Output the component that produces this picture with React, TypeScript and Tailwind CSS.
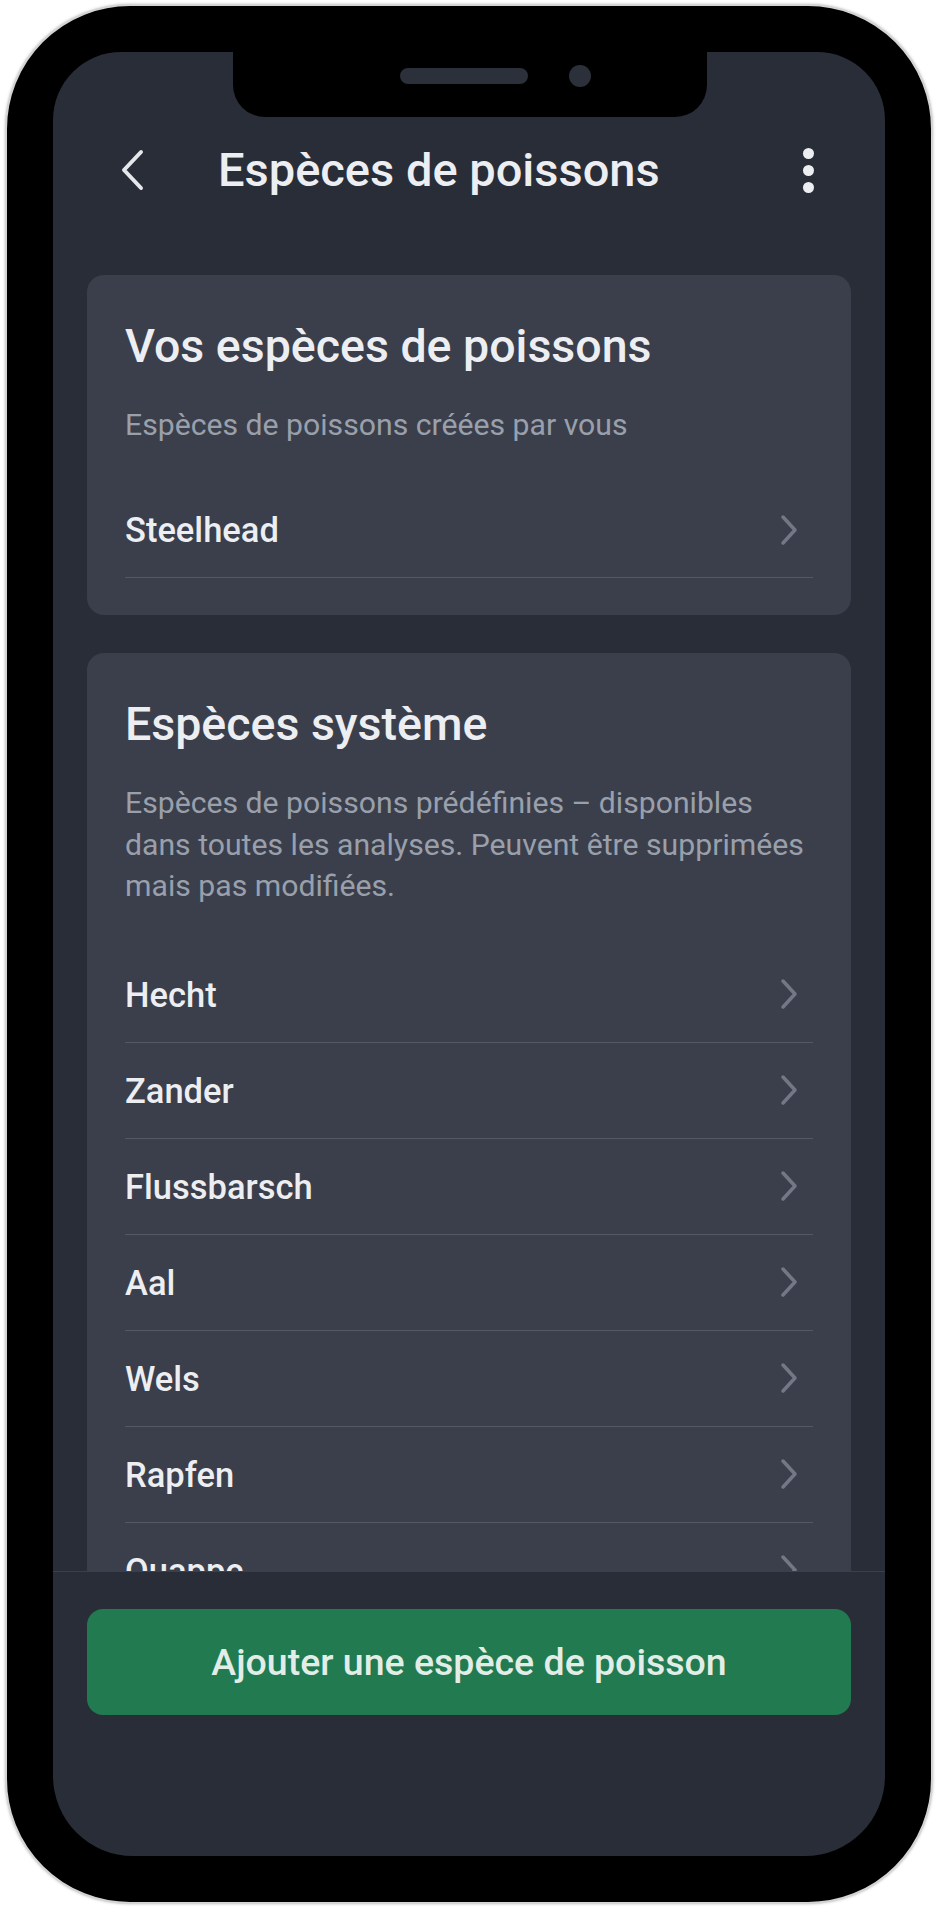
const systemSpecies = ["Hecht", "Zander", "Flussbarsch", "Aal", "Wels", "Rapfen", "Quappe"];

const RowChevron = () => (
  <svg width="18" height="32" viewBox="0 0 18 32" fill="none" className="mr-[15px] shrink-0">
    <path d="M3 3l12 13L3 29" stroke="#727886" strokeWidth="3.5" strokeLinecap="round" strokeLinejoin="round" />
  </svg>
);

const SpeciesRow = ({ name }: { name: string }) => (
  <div className="h-[96px] flex items-center justify-between border-b border-[#525866]">
    <span className="pt-[3px] text-[34.5px] font-medium text-[#eceef2]">{name}</span>
    <RowChevron />
  </div>
);

export default function App() {
  return (
    <div
      className="min-h-screen bg-white pt-[4px] pl-[5px]"
      style={{ fontFamily: 'Roboto, "Noto Sans", sans-serif' }}
    >
      {/* phone frame */}
      <div className="w-[928px] h-[1900px] rounded-[125px] bg-black border-2 border-[#d4d4d4] p-[46px] shadow-[0_0_3px_rgba(0,0,0,0.25)]">
        <div className="relative w-full h-full rounded-t-[68px] rounded-b-[80px] bg-[#292d38] overflow-hidden flex flex-col">
          {/* notch */}
          <div className="absolute top-0 left-[180px] w-[474px] h-[65px] bg-black rounded-b-[32px]">
            <div className="absolute left-[167px] top-[16px] w-[128px] h-[16px] rounded-full bg-[#2c303b]" />
            <div className="absolute left-[336px] top-[13px] w-[22px] h-[22px] rounded-full bg-[#2c303b]" />
          </div>

          {/* header */}
          <div className="mt-[78px] h-[80px] shrink-0 flex items-center pl-[67px] pr-[71px]">
            <svg width="24" height="42" viewBox="0 0 24 42" fill="none" className="shrink-0">
              <path d="M21 3L4 21l17 18" stroke="#e5e7eb" strokeWidth="4" strokeLinecap="round" strokeLinejoin="round" />
            </svg>
            <h1 className="ml-[74px] flex-1 text-[47px] font-medium text-[#eceef2]">Espèces de poissons</h1>
            <div className="flex flex-col gap-[6px]">
              <div className="w-[11px] h-[11px] rounded-full bg-[#eceef2]" />
              <div className="w-[11px] h-[11px] rounded-full bg-[#eceef2]" />
              <div className="w-[11px] h-[11px] rounded-full bg-[#eceef2]" />
            </div>
          </div>

          {/* content */}
          <div className="flex-1 overflow-hidden px-[34px] pt-[65px]">
            <div className="bg-[#3a3f4b] rounded-[17px] px-[38px] pt-[46px] pb-[37px]">
              <h2 className="text-[46.5px] leading-[50px] font-medium text-[#eceef2]">Vos espèces de poissons</h2>
              <p className="mt-[33px] text-[30.2px] leading-[41px] text-[#9aa0ab]">
                Espèces de poissons créées par vous
              </p>
              <div className="mt-[37px]">
                <SpeciesRow name="Steelhead" />
              </div>
            </div>

            <div className="mt-[38px] bg-[#3a3f4b] rounded-t-[17px] px-[38px] pt-[46px]">
              <h2 className="text-[46.5px] leading-[50px] font-medium text-[#eceef2]">Espèces système</h2>
              <p className="mt-[33px] text-[30.2px] leading-[41.5px] text-[#9aa0ab] whitespace-nowrap">
                Espèces de poissons prédéfinies – disponibles
                <br />
                dans toutes les analyses. Peuvent être supprimées
                <br />
                mais pas modifiées.
              </p>
              <div className="mt-[40px]">
                {systemSpecies.map((name) => (
                  <SpeciesRow key={name} name={name} />
                ))}
              </div>
            </div>
          </div>

          {/* bottom bar */}
          <div className="h-[285px] shrink-0 border-t border-[#3a3f4a] px-[34px] pt-[37px]">
            <button className="w-full h-[106px] rounded-[16px] bg-[#217a50] text-[37.5px] font-medium text-[#e3ede7]">
              Ajouter une espèce de poisson
            </button>
          </div>
        </div>
      </div>
    </div>
  );
}
